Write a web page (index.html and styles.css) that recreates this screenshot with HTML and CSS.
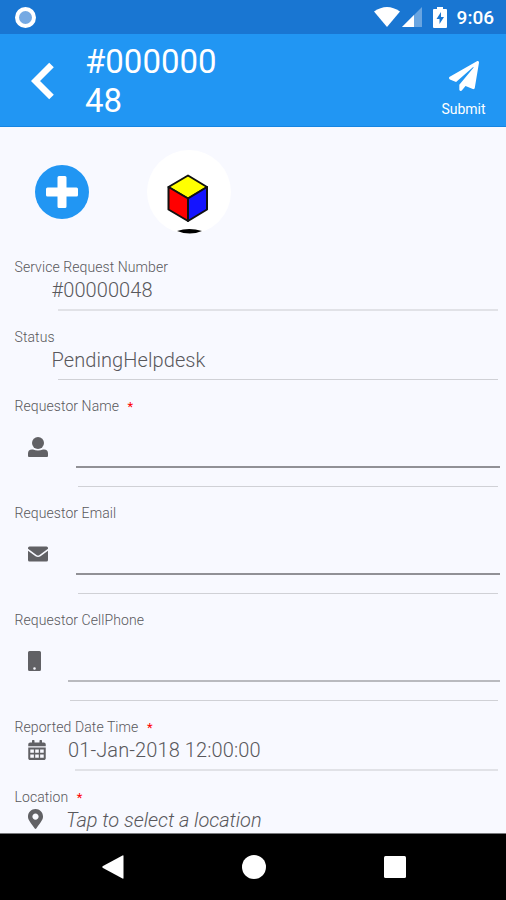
FILE: index.html
```html
<!DOCTYPE html>
<html lang="en">
<head>
    <meta charset="UTF-8">
    <meta name="viewport" content="width=device-width, initial-scale=1.0">
    <title>Service Request</title>
    <link rel="stylesheet" href="styles.css">
</head>
<body>
    <div class="status-bar">
        <div class="recording"></div>
        <svg class="wifi" width="26" height="20" viewBox="0 0 26 20"><path d="M0 4.5Q13-4.5 26 4.5L13 20Z"/></svg>
        <svg class="signal" width="20" height="20" viewBox="0 0 20 20"><path opacity=".35" d="M20 0v20H0z"/><path d="M12 8v12H0z"/></svg>
        <svg class="battery" width="14" height="21" viewBox="0 0 14 21"><path d="M4 0h6v2h3q1 0 1 1v17q0 1-1 1H1q-1 0-1-1V3q0-1 1-1h3z"/><path class="bolt" d="M8 5L3.5 12h3v5L11 10H8z"/></svg>
        <span class="clock">9:06</span>
    </div>

    <header class="toolbar">
        <svg class="back" width="24" height="38" viewBox="0 0 24 38"><path d="M20.500 3L4.500 19l16 16"/></svg>
        <h1 class="title">#000000<br>48</h1>
        <div class="submit">
            <svg width="30" height="30" viewBox="0 0 512 512"><path d="M476 3.200L12.500 270.600c-18.100 10.400-15.800 35.600 2.200 43.200L121 358.400l287.300-253.200c5.500-4.900 13.300 2.600 8.600 8.300L176 407v80.500c0 23.600 28.500 32.900 42.500 15.800L282 426l124.600 52.200c14.200 6 30.400-2.900 33-18.200l72-432C515 7.800 493.300-6.800 476 3.200z"/></svg>
            <span>Submit</span>
        </div>
    </header>

    <main class="form">
        <div class="photos">
            <svg class="add" width="54" height="54" viewBox="0 0 54 54"><circle cx="27" cy="27" r="27"/><path d="M24 11h6q1.500 0 1.500 1.500v10h10q1.500 0 1.500 1.500v6q0 1.500-1.500 1.500h-10v10q0 1.500-1.500 1.500h-6q-1.500 0-1.500-1.500v-10h-10q-1.500 0-1.500-1.500v-6q0-1.500 1.500-1.500h10v-10q0-1.500 1.500-1.500z"/></svg>
            <svg class="avatar" width="84" height="84" viewBox="0 0 84 84">
                <circle cx="42" cy="42" r="42" fill="#fff"/>
                <g stroke="#111" stroke-width="2" stroke-linejoin="round">
                    <path fill="#ff0" d="M41 25.500L60 37 41 48.500 21.500 37z"/>
                    <path fill="#ff0000" d="M21.500 37L41 48.500V71L21.500 59.500z"/>
                    <path fill="#1414ff" d="M60 37L41 48.500V71l19-11.500z"/>
                </g>
                <path d="M30 81q12-4 25 0-12 5-25 0z"/>
            </svg>
        </div>

        <div class="field">
            <div class="label">Service Request Number</div>
            <div class="value plain">#00000048</div>
            <div class="rule"></div>
        </div>
        <div class="field status">
            <div class="label">Status</div>
            <div class="value plain">PendingHelpdesk</div>
            <div class="rule thin"></div>
        </div>

        <div class="field entry">
            <div class="label">Requestor Name <span class="required">*</span></div>
            <div class="input-row">
                <svg width="20" height="20" viewBox="0 0 20 20"><circle cx="10" cy="6" r="6"/><path d="M0 19v-2.500q0-4 4-4h1q5 2 10 0h1q4 0 4 4V19q0 1-1 1H1q-1 0-1-1z"/></svg>
                <div class="input"></div>
            </div>
            <div class="rule thin"></div>
        </div>
        <div class="field entry">
            <div class="label">Requestor Email</div>
            <div class="input-row">
                <svg width="20" height="20" viewBox="0 0 20 20"><path d="M1.500 2.500h17Q20 2.500 20 4v.7l-8.500 6.200q-1.500 1-3 0L0 4.700V4q0-1.500 1.500-1.500z"/><path d="M0 6.700l7.500 5.500q2.500 1.600 5 0L20 6.700V16q0 1.500-1.500 1.500h-17Q0 17.500 0 16z"/></svg>
                <div class="input"></div>
            </div>
            <div class="rule thin"></div>
        </div>
        <div class="field entry phone">
            <div class="label">Requestor CellPhone</div>
            <div class="input-row">
                <svg width="13" height="20" viewBox="0 0 13 20"><path fill-rule="evenodd" d="M1.500 0h10Q13 0 13 1.500v17q0 1.500-1.500 1.500h-10Q0 20 0 18.500v-17Q0 0 1.500 0zM6.500 16.200a1.300 1.300 0 1 0 0 2.600 1.300 1.300 0 0 0 0-2.600z"/></svg>
                <div class="input"></div>
            </div>
            <div class="rule thin"></div>
        </div>

        <div class="field date">
            <div class="label">Reported Date Time <span class="required">*</span></div>
            <div class="value">
                <svg width="18" height="20" viewBox="0 0 448 512"><path fill-rule="evenodd" d="M0 464c0 26.500 21.500 48 48 48h352c26.500 0 48-21.500 48-48V192H0zm52-224h92v84H52zm126 0h92v84h-92zm126 0h92v84h-92zM52 370h92v84H52zm126 0h92v84h-92zm126 0h92v84h-92zM400 64h-48V16c0-9-7-16-16-16h-32c-9 0-16 7-16 16v48H160V16c0-9-7-16-16-16h-32c-9 0-16 7-16 16v48H48c-26.500 0-48 21.500-48 48v48h448v-48c0-26.500-21.500-48-48-48z"/></svg>
                <span>01-Jan-2018 12:00:00</span>
            </div>
            <div class="rule"></div>
        </div>
        <div class="field location">
            <div class="label">Location <span class="required">*</span></div>
            <div class="value">
                <svg width="15" height="20" viewBox="0 0 384 512"><path d="M172.300 501.700C27 291 0 269.400 0 192 0 86 86 0 192 0s192 86 192 192c0 77.400-27 99-172.300 309.700-9.500 13.700-29.900 13.700-39.400 0zM192 272c44.200 0 80-35.800 80-80s-35.800-80-80-80-80 35.800-80 80 35.800 80 80 80z"/></svg>
                <em>Tap to select a location</em>
            </div>
        </div>
    </main>

    <nav class="nav-bar">
        <svg width="22" height="24" viewBox="0 0 22 24"><path d="M20.500.5q1-.5 1 .5v22q0 1-1 .5L1 13q-1.500-1 0-2z"/></svg>
        <svg width="24" height="24" viewBox="0 0 24 24"><circle cx="12" cy="12" r="12"/></svg>
        <svg width="22" height="22" viewBox="0 0 22 22"><rect width="22" height="22" rx="1.500"/></svg>
    </nav>
</body>
</html>
```
FILE: styles.css
```css
* {
    box-sizing: border-box;
}

body {
    margin: 0;
    height: 900px;
    display: flex;
    flex-direction: column;
    overflow: hidden;
    font-family: Roboto, sans-serif;
    background-color: #f8f9ff;
    color: #58585c;
}

svg {
    display: block;
    flex: none;
}

.status-bar {
    height: 34px;
    flex: none;
    display: flex;
    align-items: center;
    padding: 0 12px 0 15px;
    background-color: #1976d2;
    color: #fff;
    fill: #fff;
}

.recording {
    width: 21px;
    height: 21px;
    border: 4px solid #fff;
    border-radius: 50%;
    background-color: #75a9e3;
}

.wifi {
    margin-left: auto;
}

.signal {
    margin-left: 2px;
}

.battery {
    margin-left: 11px;
}

.bolt {
    fill: #1976d2;
}

.clock {
    margin-left: 10px;
    font-size: 19px;
    font-weight: 500;
    line-height: 34px;
    padding-top: 2px;
}

.toolbar {
    height: 93px;
    flex: none;
    display: flex;
    padding: 8px 18px 0 31px;
    background-color: #2196f3;
    border-bottom: 1px solid #1685e2;
    color: #fff;
}

.back {
    margin-top: 20px;
    fill: none;
    stroke: #fff;
    stroke-width: 6.5;
}

.title {
    margin: 0 0 0 30px;
    font-size: 33px;
    font-weight: 400;
    line-height: 39px;
}

.submit {
    margin: 19px 0 0 auto;
    display: flex;
    flex-direction: column;
    align-items: center;
    width: 49px;
    font-size: 14px;
    line-height: 18px;
    fill: #fff;
}

.submit span {
    margin-top: 9px;
}

.form {
    flex: 1;
    min-height: 0;
    overflow: hidden;
}

.photos {
    height: 131px;
    display: flex;
    align-items: flex-start;
    padding: 23px 0 0 35px;
}

.add {
    margin-top: 15px;
    fill: #2196f3;
}

.add path {
    fill: #fff;
}

.avatar {
    margin-left: 58px;
}

.field {
    height: 70px;
    padding-right: 8px;
    fill: #616165;
}

.status {
    height: 69px;
}

.entry {
    height: 107px;
}

.label {
    padding-left: 14.5px;
    font-size: 14px;
    font-weight: 300;
    line-height: 18px;
    letter-spacing: 0.08px;
    height: 18px;
}

.required {
    margin-left: 5px;
    color: #f00;
    font-size: 13px;
    font-weight: 400;
}

.value {
    display: flex;
    align-items: center;
    height: 28px;
    padding-left: 28px;
    font-size: 20px;
    font-weight: 300;
}

.plain {
    padding-left: 51.5px;
    letter-spacing: 0.08px;
}

.rule {
    height: 2px;
    margin: 5px 0 0 58px;
    background-color: #e1e2e7;
}

.thin {
    height: 1px;
    background-color: #d0d1d6;
}

.input-row {
    display: flex;
    height: 53px;
    padding: 22px 0 0 28px;
    margin-right: -2px;
}

.input {
    flex: 1;
    margin: -22px 0 0 28px;
    border-bottom: 2px solid #919196;
}

.entry .rule {
    margin: 18px 0 0 78px;
}

.phone .input {
    margin-left: 27px;
    border-bottom-color: #b9babf;
}

.phone .rule {
    margin-left: 70px;
}

.date .rule {
    margin-left: 75px;
}

.date .value span {
    margin-left: 22px;
    letter-spacing: 0.1px;
}

.location svg {
    margin-top: -2px;
}

.location em {
    margin-left: 23px;
    letter-spacing: -0.04px;
}

.nav-bar {
    height: 67px;
    flex: none;
    display: flex;
    align-items: center;
    gap: 118px;
    padding-left: 102px;
    background-color: #000;
    border-top: 1px solid #77787b;
    fill: #fff;
}
```
